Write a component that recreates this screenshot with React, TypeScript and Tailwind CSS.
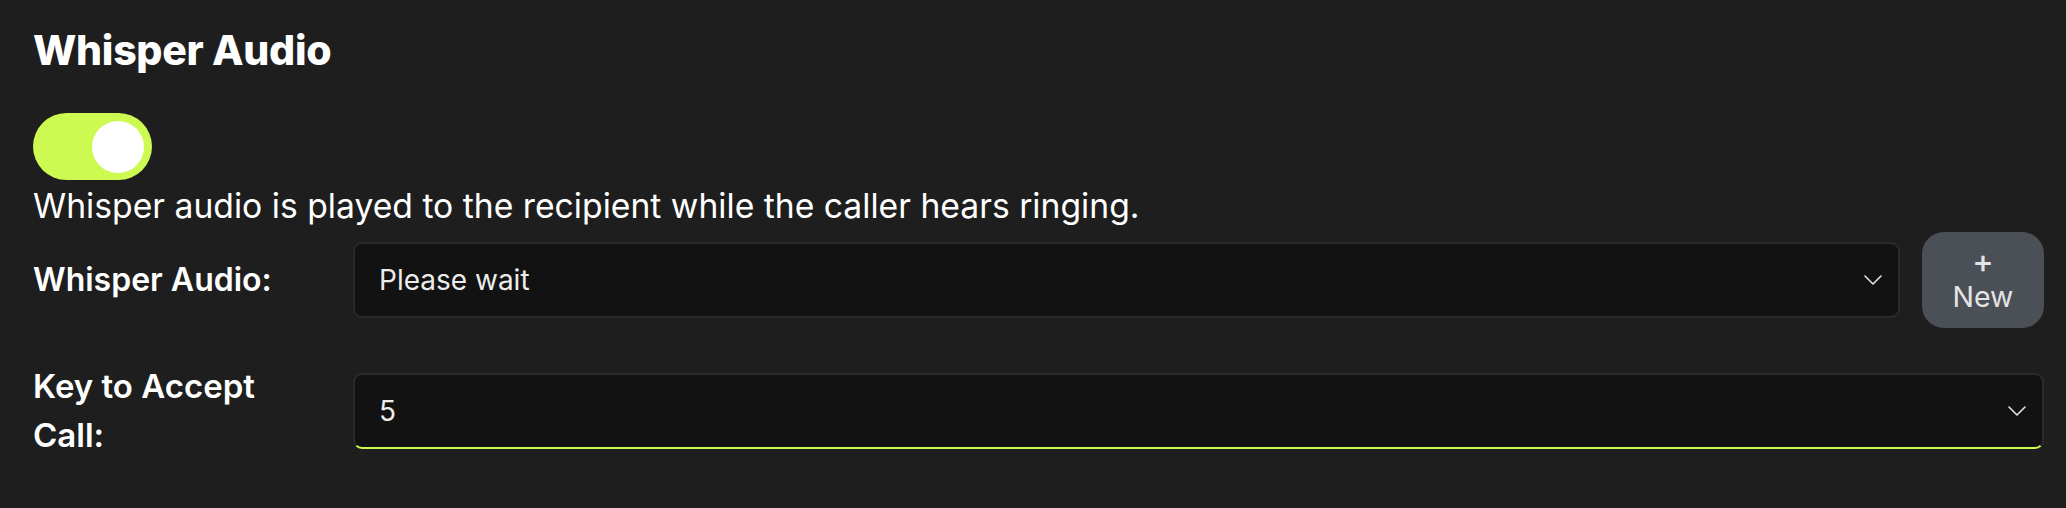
import React from "react";

function Chevron() {
  return (
    <svg width="18" height="10" viewBox="0 0 18 10" fill="none" className="shrink-0">
      <path d="M1 1L9 9L17 1" stroke="#e5e5e5" strokeWidth="1.6" strokeLinecap="round" strokeLinejoin="round" />
    </svg>
  );
}

export default function App() {
  return (
    <div
      className="h-[508px] w-full bg-[#1e1e1e] pl-[33px] pr-[22px] text-white"
      style={{ fontFamily: "Inter, 'Noto Sans', sans-serif" }}
    >
      <div className="flex h-[100px] items-center">
        <h2 className="text-[41px] font-extrabold leading-none tracking-[-0.3px]">Whisper Audio</h2>
      </div>
      <div className="mt-[13px] flex h-[67px] w-[119px] items-center justify-end rounded-full bg-[#ccfa50] pr-[8px]">
        <div className="h-[52px] w-[52px] rounded-full bg-white" />
      </div>
      <p className="h-[52px] text-[33.7px] leading-[52px]">
        Whisper audio is played to the recipient while the caller hears ringing.
      </p>
      <div className="flex h-[96px] items-center">
        <div className="w-[320px] shrink-0 text-[32px] font-semibold">Whisper Audio:</div>
        <div className="flex h-[76px] flex-1 items-center justify-between rounded-[9px] border-2 border-[#2a2a2a] bg-[#121212] pl-[24px] pr-[16px]">
          <span className="text-[28px] text-[#ececec]">Please wait</span>
          <Chevron />
        </div>
        <button className="ml-[22px] flex h-[96px] w-[122px] shrink-0 flex-col items-center justify-center rounded-[22px] bg-[#4b5057] text-[28.5px] leading-[36px] text-[#e4e4e4]">
          <span className="text-[32px] font-medium leading-[34px]">+</span>
          <span>New</span>
        </button>
      </div>
      <div className="mt-[34px] flex h-[98px] items-center">
        <div className="w-[320px] shrink-0 text-[33px] font-semibold leading-[49px]">
          Key to Accept
          <br />
          Call:
        </div>
        <div className="flex h-[76px] flex-1 items-center justify-between rounded-[9px] border-2 border-[#2a2a2a] border-b-[#ccfa50] bg-[#121212] pl-[24px] pr-[16px]">
          <span className="text-[28px] text-[#ececec]">5</span>
          <Chevron />
        </div>
      </div>
    </div>
  );
}
